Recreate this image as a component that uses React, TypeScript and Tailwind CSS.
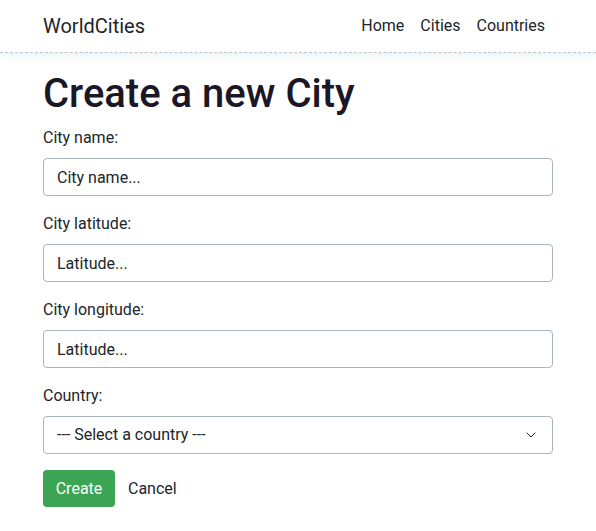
import { ChevronDown } from "lucide-react";

const fields = [
  { label: "City name:", placeholder: "City name..." },
  { label: "City latitude:", placeholder: "Latitude..." },
  { label: "City longitude:", placeholder: "Latitude..." },
];

export default function App() {
  return (
    <div className="min-h-screen bg-white text-[#212529] font-['Roboto',sans-serif] text-base">
      {/* Navbar */}
      <header className="h-[53px] border-b border-dashed border-[#b8c6cf] shadow-[0_3px_6px_rgba(120,170,170,0.15)]">
        <div className="mx-[43px] flex h-full items-center justify-between">
          <span className="text-[20px] leading-none text-[#212529]">WorldCities</span>
          <nav className="flex items-center text-[16px]">
            <a className="px-2">Home</a>
            <a className="px-2">Cities</a>
            <a className="px-2">Countries</a>
          </nav>
        </div>
      </header>

      <main className="mx-[43px] pt-[17px]">
        <h1 className="text-[40px] font-medium leading-[48px] mb-2 text-[#1b1726]">Create a new City</h1>

        {fields.map((f) => (
          <div key={f.label} className="mb-4">
            <label className="block leading-6 mb-2">{f.label}</label>
            <input
              className="w-full h-[38px] rounded border border-[#aab4c0] px-[13px] text-base placeholder:text-[#212529] outline-none"
              placeholder={f.placeholder}
            />
          </div>
        ))}

        <div className="mb-4">
          <label className="block leading-6 mb-2">Country:</label>
          <div className="relative h-[38px] w-full rounded border border-[#aab4c0] flex items-center px-[13px]">
            <span>--- Select a country ---</span>
            <ChevronDown className="absolute right-[13px] w-4 h-4" strokeWidth={1.5} />
          </div>
        </div>

        <div className="flex items-center">
          <button className="h-[37px] w-[72px] rounded bg-[#3ca553] text-white">Create</button>
          <button className="h-[37px] ml-[1px] px-3 text-[#212529]">Cancel</button>
        </div>
      </main>
    </div>
  );
}
